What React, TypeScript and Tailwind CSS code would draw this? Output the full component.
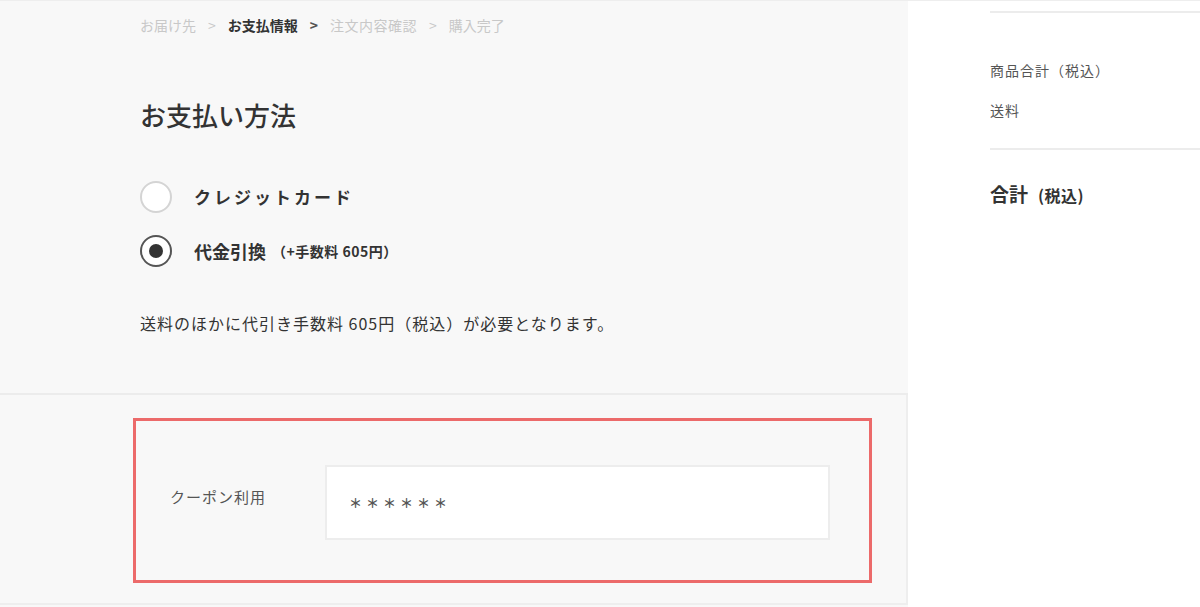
import React from 'react'

const font = { fontFamily: '"Noto Sans CJK JP", "Noto Sans", sans-serif' }

function Radio({ checked }: { checked?: boolean }) {
  return checked ? (
    <span className="w-8 h-8 rounded-full border-2 border-[#555] bg-white flex items-center justify-center shrink-0">
      <span className="w-[14px] h-[14px] rounded-full bg-[#333]" />
    </span>
  ) : (
    <span className="w-8 h-8 rounded-full border-2 border-[#d4d4d4] bg-white shrink-0" />
  )
}

export default function App() {
  return (
    <div className="flex w-[1200px] h-[607px] overflow-hidden bg-white text-[#333] border-t border-[#eee]" style={font}>
      {/* Left: payment form */}
      <div className="w-[908px] flex flex-col bg-[#f8f8f8]">
        <div className="h-[394px] px-[140px] pt-[14px] border-b-2 border-[#ececec]">
          <div className="flex items-center text-[14px] leading-5 text-[#c8c8c8]">
            <span>お届け先</span>
            <span className="mx-[12px]">&gt;</span>
            <span className="font-bold text-[#333]">お支払情報</span>
            <span className="mx-[12px] font-bold text-[#555]">&gt;</span>
            <span className="tracking-[0.5px]">注文内容確認</span>
            <span className="mx-[12px]">&gt;</span>
            <span>購入完了</span>
          </div>

          <h2 className="mt-[64px] text-[26px] leading-8 font-medium text-[#333]">お支払い方法</h2>

          <div className="mt-[50px] flex flex-col gap-[22px]">
            <label className="flex items-center">
              <Radio />
              <span className="ml-[22px] text-[17px] font-bold text-[#333] tracking-[3px]">クレジットカード</span>
            </label>
            <label className="flex items-center">
              <Radio checked />
              <span className="ml-[22px] text-[18px] font-bold text-[#333]">代金引換</span>
              <span className="ml-[6px] text-[14px] font-bold text-[#333] tracking-[0.5px]">（+手数料 605円）</span>
            </label>
          </div>

          <p className="mt-[44px] text-[16px] leading-6 tracking-[1px] text-[#333]">
            送料のほかに代引き手数料 605円（税込）が必要となります。
          </p>
        </div>

        <div className="flex-1 pl-[133px] pr-[36px] pt-[23px] border-b-2 border-r-2 border-[#eeeeee] mb-[2px]">
          <div className="w-[739px] h-[165px] border-[3px] border-[#ec6a6a] flex items-center pl-[34px] pt-[4px]">
            <span className="w-[155px] text-[15px] tracking-[1px] text-[#555] mb-[10px]">クーポン利用</span>
            <div className="w-[505px] h-[75px] bg-white border-2 border-[#ededed] flex items-center pl-[22px]">
              <span className="text-[13px] font-bold tracking-[4px] text-[#555]">＊＊＊＊＊＊</span>
            </div>
          </div>
        </div>
      </div>

      {/* Right: summary */}
      <div className="flex-1 pl-[82px] bg-white">
        <div className="mt-[10px] border-t-2 border-[#ececec]" />
        <div className="pt-[45px] pb-[26px] flex flex-col gap-[16px] text-[14px] leading-6 tracking-[1px] text-[#555]">
          <span>商品合計（税込）</span>
          <span>送料</span>
        </div>
        <div className="border-t-2 border-[#ececec]" />
        <div className="pt-[30px] flex items-baseline text-[#333] font-bold">
          <span className="text-[19px]">合計</span>
          <span className="text-[16px] ml-[10px] tracking-[0.5px]">(税込)</span>
        </div>
      </div>
    </div>
  )
}
